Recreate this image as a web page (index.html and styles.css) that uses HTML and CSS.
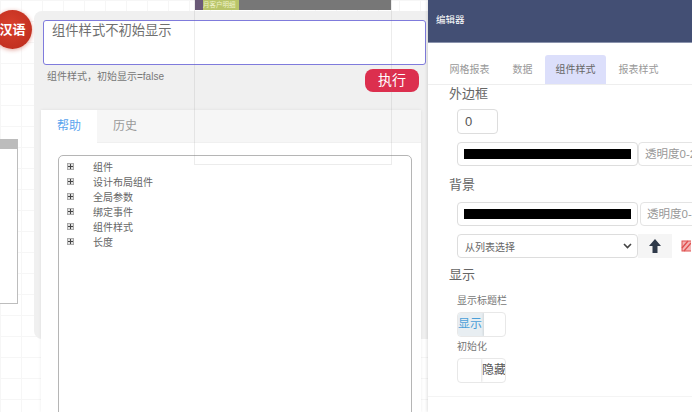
FILE: index.html
```html
<!DOCTYPE html>
<html lang="zh-CN">
<head>
  <meta charset="UTF-8">
  <title>编辑器</title>
  <link rel="stylesheet" href="styles.css">
</head>
<body>
  <div class="workspace">
    <!-- Canvas -->
    <div class="canvas">
      <div class="lang-badge">汉语</div>
      <div class="widget"><div class="widget-head"></div></div>

      <div class="dialog-bg"></div>
      <div class="dialog">
        <div class="query">组件样式不初始显示</div>
        <div class="query-row">
          <span class="hint">组件样式，初始显示=false</span>
          <button class="run">执行</button>
        </div>
        <div class="card">
          <div class="card-tabs">
            <span class="card-tab active">帮助</span>
            <span class="card-tab">历史</span>
          </div>
          <div class="tree">
            <div class="tree-row"><i class="plus"></i>组件</div>
            <div class="tree-row"><i class="plus"></i>设计布局组件</div>
            <div class="tree-row"><i class="plus"></i>全局参数</div>
            <div class="tree-row"><i class="plus"></i>绑定事件</div>
            <div class="tree-row"><i class="plus"></i>组件样式</div>
            <div class="tree-row"><i class="plus"></i>长度</div>
          </div>
        </div>
      </div>

      <div class="ghost">
        <div class="ghost-head"><span class="ghost-mark"></span><span class="ghost-title">月客户明细</span></div>
      </div>
    </div>

    <!-- Editor panel -->
    <aside class="panel">
      <div class="panel-head">编辑器</div>
      <nav class="tabs">
        <a>网格报表</a>
        <a>数据</a>
        <a class="active">组件样式</a>
        <a>报表样式</a>
      </nav>
      <div class="panel-body">
        <h4 class="group-title first">外边框</h4>
        <div class="field"><div class="num">0</div></div>
        <div class="field row">
          <div class="color"><span></span></div>
          <div class="alpha">透明度0-255</div>
        </div>
        <h4 class="group-title">背景</h4>
        <div class="field row">
          <div class="color"><span></span></div>
          <div class="alpha wide">透明度0-255</div>
        </div>
        <div class="field row">
          <div class="picker">从列表选择
            <svg width="9" height="6" viewBox="0 0 9 6"><path d="M1 1l3.5 3.5L8 1" fill="none" stroke="#444" stroke-width="1.6"/></svg>
          </div>
          <div class="tool">
            <svg width="12" height="14" viewBox="0 0 12 14"><path d="M6 0L12 7H8.5V14H3.5V7H0Z" fill="#2f3a4a"/></svg>
          </div>
          <svg class="no-img" width="10" height="12" viewBox="0 0 10 12"><rect x="1" y="1" width="10" height="10" fill="#f4b5b5" stroke="#e0504f"/><path d="M1 8l6-7M3 11l7-8" stroke="#e0504f" stroke-width="1.4"/></svg>
        </div>
        <h4 class="group-title show">显示</h4>
        <div class="sub-label first">显示标题栏</div>
        <div class="switch on"><span class="on-text">显示</span><span class="knob"></span></div>
        <div class="sub-label">初始化</div>
        <div class="switch off"><span class="knob"></span><span class="off-text">隐藏</span></div>
      </div>
      <div class="panel-foot"></div>
    </aside>
  </div>
</body>
</html>
```
FILE: styles.css
```css
/* Global */
html, body { height: 100%; }
body {
  margin: 0;
  overflow: hidden;
  background: #fff;
  font-family: "Liberation Sans", "Noto Sans CJK SC", sans-serif;
  color: #666;
}
.workspace { display: flex; width: 692px; height: 412px; overflow: hidden; }

/* Canvas */
.canvas {
  position: relative;
  width: 428px;
  flex: none;
  background-color: #fff;
  background-image:
    linear-gradient(#f6f6f6 1px, transparent 1px),
    linear-gradient(90deg, #f6f6f6 1px, transparent 1px);
  background-size: 21px 21px;
}
.lang-badge {
  position: absolute;
  left: -7px;
  top: 10px;
  width: 39px;
  height: 39px;
  border-radius: 50%;
  background: radial-gradient(circle at 45% 40%, #d9402c, #b92a1c);
  box-shadow: 0 1px 4px rgba(190, 50, 30, 0.45);
  color: #fff;
  font-size: 13px;
  font-weight: bold;
  line-height: 39px;
  text-align: center;
}
.widget {
  position: absolute;
  left: -10px;
  top: 139px;
  width: 26px;
  height: 164px;
  background: #fff;
  border: 1px solid #bdbdbd;
  border-top: 0;
}
.widget-head { height: 10px; background: #bcbcbc; }

/* Dialog */
.dialog-bg {
  position: absolute;
  left: 34px;
  top: 11px;
  width: 394px;
  height: 328px;
  background: #f0f0f0;
  border-radius: 8px 0 0 8px;
}
.dialog {
  position: absolute;
  left: 43px;
  top: 20px;
  width: 383px;
}
.query {
  box-sizing: border-box;
  height: 45px;
  padding: 0 8px;
  background: #fff;
  border: 1px solid #7f7bdc;
  border-radius: 3px;
  font-size: 13.3px;
  line-height: 20px;
  color: #6f6f6f;
}
.query-row {
  box-sizing: border-box;
  display: flex;
  justify-content: space-between;
  align-items: flex-start;
  height: 45px;
  padding: 4px 7px 0 4px;
}
.hint { font-size: 10px; line-height: 15px; color: #777; }
.run {
  width: 54px;
  height: 23px;
  padding: 0;
  border: 0;
  border-radius: 8px;
  background: #dc2f4e;
  color: #fff;
  font-family: "Liberation Serif", "Noto Sans CJK SC", serif;
  font-size: 14px;
  line-height: 23px;
}
.card {
  box-sizing: border-box;
  width: 380px;
  height: 302px;
  margin-left: -2px;
  background: #fff;
  box-shadow: 0 0 3px rgba(0, 0, 0, 0.08);
}
.card-tabs { display: flex; height: 32px; background: #f6f6f6; border-bottom: 1px solid #f0f0f0; }
.card-tab { width: 56px; font-size: 12px; line-height: 33px; text-align: center; color: #999; }
.card-tab.active { height: 33px; background: #fff; color: #5aa4ee; }
.tree {
  box-sizing: border-box;
  width: 354px;
  height: 300px;
  margin: 12px 0 0 17px;
  padding: 3px 0 0 8px;
  border: 1px solid #b5b5b5;
  border-radius: 5px;
}
.tree-row {
  display: flex;
  align-items: center;
  height: 15px;
  font-size: 10px;
  color: #666;
}
.plus {
  position: relative;
  box-sizing: border-box;
  flex: none;
  width: 7px;
  height: 7px;
  margin-right: 19px;
  background: #e0e0e0;
  border: 1px solid #aaa;
}
.plus::before {
  content: "";
  position: absolute;
  left: 0;
  top: 2px;
  width: 5px;
  height: 1px;
  background: #444;
}
.plus::after {
  content: "";
  position: absolute;
  left: 2px;
  top: 0;
  width: 1px;
  height: 5px;
  background: #444;
}

/* Ghost component over the dialog */
.ghost {
  position: absolute;
  left: 194px;
  top: 0;
  width: 196px;
  height: 164px;
  border: 1px solid rgba(120, 120, 120, 0.14);
  border-top: 0;
}
.ghost-head {
  display: flex;
  align-items: center;
  height: 10px;
  background: #777;
  font-size: 6.5px;
  line-height: 10px;
}
.ghost-mark { width: 8px; height: 10px; background: #6b5a78; }
.ghost-title { padding-right: 3px; background: #b9c56a; color: #eef2c8; white-space: nowrap; }

/* Editor panel */
.panel {
  width: 264px;
  flex: none;
  background: #fff;
  overflow: hidden;
  box-shadow: -1px 0 3px rgba(0, 0, 0, 0.12);
  position: relative;
}
.panel-head {
  box-sizing: border-box;
  height: 43px;
  padding-left: 8px;
  background: #434f74;
  border-bottom: 1px solid #8a93ad;
  color: #fff;
  font-size: 9.5px;
  line-height: 39px;
}
.tabs {
  display: flex;
  gap: 2px;
  height: 29px;
  margin-top: 12px;
  padding-left: 11px;
  border-bottom: 1px solid #eee;
}
.tabs a {
  padding: 0 10.5px;
  font-size: 10px;
  line-height: 29px;
  color: #999;
  white-space: nowrap;
}
.tabs a.active { background: #dcdffb; color: #666; border-radius: 3px 3px 0 0; }

.panel-body { padding-left: 21px; width: 300px; }
.group-title { margin: 0; font-size: 13px; font-weight: normal; line-height: 18px; color: #666; }
.field { margin: 6px 0 0 8px; }
.field.row { display: flex; align-items: center; margin-top: 8px; }
.num {
  box-sizing: border-box;
  width: 41px;
  height: 25px;
  padding-left: 7px;
  border: 1px solid #ddd;
  border-radius: 4px;
  font-size: 13px;
  line-height: 23px;
  color: #555;
}
.color {
  box-sizing: border-box;
  flex: none;
  width: 181px;
  height: 24px;
  padding: 6px 6px;
  border: 1px solid #ddd;
  border-radius: 4px;
}
.color span { display: block; height: 10px; background: #000; }
.alpha {
  box-sizing: border-box;
  flex: none;
  width: 80px;
  height: 24px;
  padding-left: 6px;
  border: 1px solid #e4e4e4;
  border-radius: 4px;
  font-size: 11.5px;
  line-height: 22px;
  color: #999;
  white-space: nowrap;
}
.alpha.wide { margin-left: 2px; }
.picker {
  box-sizing: border-box;
  display: flex;
  justify-content: space-between;
  align-items: center;
  flex: none;
  width: 181px;
  height: 24px;
  padding: 0 5px 0 7px;
  border: 1px solid #ddd;
  border-radius: 4px;
  font-size: 10px;
  color: #666;
}
.tool {
  display: flex;
  align-items: center;
  justify-content: center;
  flex: none;
  width: 34px;
  height: 24px;
  background: #f5f5f5;
}
.no-img { flex: none; margin-left: 9px; }
.field.row + .group-title { margin-top: 10px; }
.field.row + .group-title.show { margin-top: 8px; }
.sub-label { margin: 3px 0 0 8px; font-size: 10px; line-height: 14px; color: #777; }
.group-title + .sub-label { margin-top: 10px; }
.switch {
  box-sizing: border-box;
  display: flex;
  width: 49px;
  height: 25px;
  margin: 4px 0 0 8px;
  border: 1px solid #e8e8e8;
  border-radius: 4px;
  overflow: hidden;
  font-size: 12px;
  line-height: 23px;
  white-space: nowrap;
}
.switch + .sub-label { margin-top: 3px; }
.on-text { width: 26px; flex: none; background: #e8eef2; color: #4a9fd8; }
.off-text { color: #555; margin-left: 1px; }
.switch.off .knob { width: 23px; flex: none; box-shadow: 1px 0 2px rgba(0, 0, 0, 0.12); }
.switch.on .knob { flex: 1; box-shadow: -1px 0 2px rgba(0, 0, 0, 0.1); }
.panel-foot { margin-top: 13px; border-top: 1px solid #f4f4f4; }
```
